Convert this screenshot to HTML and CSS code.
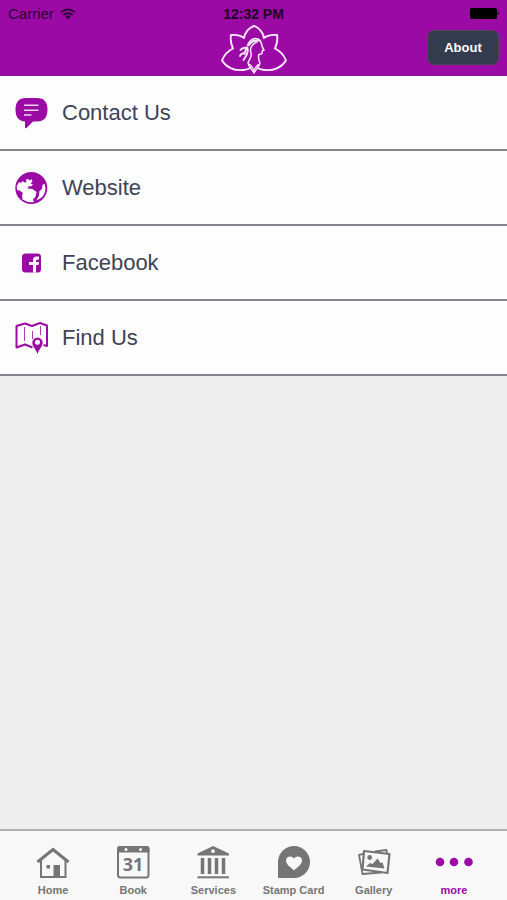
FILE: index.html
```html
<!DOCTYPE html>
<html lang="en">
<head>
<meta charset="utf-8">
<meta name="viewport" content="width=device-width, initial-scale=1">
<title>More</title>
<link rel="stylesheet" href="styles.css">
</head>
<body>
<header class="header">
  <div class="status">
    <div class="carrier">
      <span>Carrier</span>
      <svg class="wifi" viewBox="0 0 16 12" width="16" height="12" aria-hidden="true">
        <path d="M1.200 4.400Q8-1.600 14.800 4.400M3.600 7Q8 3.200 12.400 7" fill="none" stroke="currentColor" stroke-width="1.800"/>
        <path d="M5.400 8.600Q8 6.600 10.600 8.600L8 11.400Z" fill="currentColor"/>
      </svg>
    </div>
    <time class="clock">12:32 PM</time>
    <svg class="battery" viewBox="0 0 29 12" width="29" height="12" aria-hidden="true">
      <rect x="0" y="0" width="27" height="11" rx="1.500"/>
      <path d="M27.500 3.500Q30 5.500 27.500 7.500Z"/>
    </svg>
  </div>
  <div class="navbar">
    <svg class="logo" viewBox="0 0 66 50" width="66" height="50" role="img" aria-label="Lotus logo">
      <g fill="none" stroke="currentColor" stroke-linejoin="round" stroke-linecap="round">
        <path stroke-width="1.900" d="M23 13C24 7 28 3 33 0.800C38 3 42 7 43 13C47 10 51 9.500 56 10C57 15 56 19 54 23.500C59 26 63 30 65 35.500C61 42 53 46 44 45C40 44.500 37.500 44 36.500 42.500M29.500 42.500C28.500 44 26 44.500 22 45C13 46 5 42 1 35.500C3 30 7 26 12 23.500C10 19 9 15 10 10C15 9.500 19 10 23 13"/>
        <path stroke-width="1.500" d="M26.500 20C28 15 33 12.500 37 14C41 16 40.500 20 41.500 22.500L43 25L41.300 25.800C41.500 29 40.500 29.500 38 29.300C37 32 37.500 35 39 38C38.500 42 35 44 33 48C31 44 27.500 42 27 38C28.500 34 31 32 30 28C28.500 24 30.500 19 36 17"/>
        <path stroke-width="2.200" d="M28 20C30 16.500 34 15 38 15.500"/>
        <path stroke-width="1.800" d="M19.500 25C21.500 22.500 24 22.500 26.500 22.500C25 24 24 26 23.500 29M26.500 23C28 28 25 31 22.500 35M19 31C20 28.500 22 28 24 28"/>
        <path stroke-width="1.300" d="M28 39C30 40 32 43 33 46C34 43 36 40 38.500 39"/>
      </g>
    </svg>
    <button class="about" type="button">About</button>
  </div>
</header>

<main class="content">
  <ul class="menu">
    <li><a class="row" href="#contact">
      <svg class="row-icon" viewBox="0 0 34 34" width="34" height="34" aria-hidden="true">
        <path fill="currentColor" d="M12 2H23Q33.500 2 33.500 13.500Q33.500 25.500 23 25.500H19L12.500 32Q11 33 11 31V25.500Q1.500 25 1.500 13.500Q1.500 2 12 2Z"/>
        <path stroke="#f3d5f5" stroke-width="1.500" d="M10 9.300H24.500M10 14.300H24.500M10 19H17.500"/>
      </svg>
      <span>Contact Us</span></a></li>
    <li><a class="row" href="#website">
      <svg class="row-icon" viewBox="0 0 34 34" width="34" height="34" aria-hidden="true">
        <circle cx="17.300" cy="17" r="15" fill="currentColor" stroke="currentColor" stroke-width="2"/>
        <path fill="#fff" d="M2.800 15L5 11L7 12L8.500 10L10.500 11.500L12.500 11L12 8.500L14 8L16 9.500L17.500 8L18.500 10.500L16.500 12.500L19 13.500L17 15.500L15 15L13.500 17.500L18.500 18L22.500 21L21.500 25.500L19 28.500L20 31Q14 32 8.500 28.500L8 24L9 22L5.500 19.500L3 19ZM30.500 12.500L28.500 14L28 18L25.500 20L25 24.500L22.500 29.500Q31.500 26 31.500 17Z"/>
      </svg>
      <span>Website</span></a></li>
    <li><a class="row" href="#facebook">
      <svg class="row-icon" viewBox="0 0 34 34" width="34" height="34" aria-hidden="true">
        <rect x="8" y="7.500" width="19" height="19" rx="3.500" fill="currentColor"/>
        <path fill="#fff" d="M19 26.500V19H15V16H19V14Q19 10.500 22.500 10.500H25V13.500H23.500Q22 13.500 22 15V16H25L24.500 19H22V26.500Z"/>
      </svg>
      <span>Facebook</span></a></li>
    <li><a class="row" href="#find">
      <svg class="row-icon" viewBox="0 0 34 34" width="34" height="34" aria-hidden="true">
        <path fill="none" stroke="currentColor" stroke-width="2" stroke-linejoin="round" d="M18.500 26.500L11 23.500L2.500 26.500V5L11 2.500L18 5L26 2L33 4.500V25L29.500 24"/>
        <path fill="none" stroke="currentColor" stroke-width="1" opacity="0.800" d="M10.500 6V20M18.500 10V18M26.500 5V14"/>
        <path fill="currentColor" fill-rule="evenodd" d="M23.500 33C22 28 18.300 25.500 18.300 21.700A5.200 5.200 0 0 1 28.700 21.700C28.700 25.500 25 28 23.500 33ZM23.500 18.800A2.500 2.500 0 1 0 23.500 23.800A2.500 2.500 0 1 0 23.500 18.800Z"/>
      </svg>
      <span>Find Us</span></a></li>
  </ul>
</main>

<nav class="tabs" aria-label="Main">
  <a class="tab" href="#home">
    <svg viewBox="0 0 34 34" width="34" height="34" aria-hidden="true">
      <path fill="none" stroke="currentColor" stroke-width="3" d="M1.500 17L17 4.500L32.500 17"/>
      <path fill="none" stroke="currentColor" stroke-width="2" d="M5 15V32H29.500V15"/>
      <path fill="currentColor" d="M17.500 20H24V32H17.500ZM10.500 20H14V23.500H10.500Z"/>
    </svg>
    <span>Home</span></a>
  <a class="tab" href="#book">
    <svg viewBox="0 0 34 34" width="34" height="34" aria-hidden="true">
      <rect x="2" y="2" width="30.500" height="30.500" rx="2.500" fill="none" stroke="currentColor" stroke-width="2"/>
      <path fill="currentColor" d="M1 7.500V4Q1 1 4 1H30.500Q33.500 1 33.500 4V7.500Z"/>
      <circle cx="10" cy="4.500" r="1.500" fill="#f8f8f8"/><circle cx="24.500" cy="4.500" r="1.500" fill="#f8f8f8"/>
      <text class="date" x="17" y="26" text-anchor="middle" fill="currentColor">31</text>
    </svg>
    <span>Book</span></a>
  <a class="tab" href="#services">
    <svg viewBox="0 0 34 34" width="34" height="34" aria-hidden="true">
      <path fill="currentColor" fill-rule="evenodd" d="M17 1L33 8.500V10.500H1.500V8.500ZM17 4.300A1.900 1.900 0 1 0 17 8.100A1.900 1.900 0 1 0 17 4.300Z"/>
      <path fill="none" stroke="currentColor" stroke-width="3.500" d="M6.500 13V29M13.500 13V29M20.500 13V29M27.500 13V29"/>
      <path stroke="currentColor" stroke-width="2" d="M1.500 32.300H33"/>
    </svg>
    <span>Services</span></a>
  <a class="tab" href="#stamp">
    <svg viewBox="0 0 34 34" width="34" height="34" aria-hidden="true">
      <path fill="currentColor" d="M17 1A16 16 0 0 1 17 33H2Q1 33 1 32V17A16 16 0 0 1 17 1Z"/>
      <path fill="#f8f8f8" d="M17 25.500C14 22.500 9 19.500 9 15.500C9 11 14.800 10 17 13.500C19.200 10 25 11 25 15.500C25 19.500 20 22.500 17 25.500Z"/>
    </svg>
    <span>Stamp Card</span></a>
  <a class="tab" href="#gallery">
    <svg viewBox="0 0 34 34" width="34" height="34" aria-hidden="true">
      <path fill="none" stroke="currentColor" stroke-width="1.800" stroke-linejoin="round" d="M6 9L2 9.800L5.500 29L24 27.500M18 6.500L29.500 5L30 8"/>
      <path fill="none" stroke="currentColor" stroke-width="2.200" stroke-linejoin="round" d="M7 6L32.500 9L30.500 28L5.500 24.500Z"/>
      <path fill="currentColor" d="M9 21.500L13 18L15.500 19L20.500 13.500L23.500 18L25.500 17.500L27.500 23.500Z"/>
      <circle cx="12.700" cy="12.500" r="2.400" fill="currentColor"/>
    </svg>
    <span>Gallery</span></a>
  <a class="tab active" href="#more" aria-current="page">
    <svg viewBox="0 0 38 34" width="38" height="34" aria-hidden="true">
      <g fill="currentColor"><circle cx="5" cy="17" r="4.300"/><circle cx="19" cy="17" r="4.300"/><circle cx="33.500" cy="17" r="4.300"/></g>
    </svg>
    <span>more</span></a>
</nav>
</body>
</html>
```
FILE: styles.css
```css
* {
  box-sizing: border-box;
}

body {
  margin: 0;
  min-height: 100vh;
  display: flex;
  flex-direction: column;
  background: #eee;
  font-family: "Liberation Sans", Arial, sans-serif;
}

a {
  color: inherit;
  text-decoration: none;
}

.header {
  background: #9c0aa6;
  border-bottom: 1px solid #8a1494;
}

.status,
.navbar {
  display: grid;
  grid-template-columns: 1fr auto 1fr;
}

.status {
  height: 25px;
  padding: 0 8px;
  align-items: center;
  color: #2b0633;
  font-size: 14px;
  line-height: 28px;
}

.carrier {
  display: flex;
  align-items: center;
  gap: 6px;
  font-size: 15px;
}

.clock {
  color: #1d0423;
  font-weight: bold;
}

.battery {
  justify-self: end;
  fill: #000;
}

.navbar {
  height: 50px;
  padding: 0 8px;
}

.logo {
  grid-column: 2;
  color: #fbeafc;
}

.about {
  justify-self: end;
  width: 72px;
  height: 35px;
  margin-top: 5px;
  padding: 0;
  border: 1px solid #4b4a58;
  border-radius: 7px;
  background: #333b4f;
  color: #fff;
  font: bold 13px "Liberation Sans", Arial, sans-serif;
}

.content {
  flex: 1;
}

.menu {
  margin: 0;
  padding: 0;
  list-style: none;
}

.row {
  display: flex;
  align-items: center;
  gap: 14px;
  height: 75px;
  padding: 0 14px;
  border-bottom: 2px solid #85858f;
  background: #fdfdfd;
  color: #3d4456;
  font-size: 22px;
  line-height: 26px;
}

.row-icon {
  color: #9c0aa6;
}

.tabs {
  display: grid;
  grid-template-columns: repeat(6, 1fr);
  padding: 14px 13px 3px;
  border-top: 2px solid #b0b0b0;
  background: #f8f8f8;
}

.tab {
  display: flex;
  flex-direction: column;
  align-items: center;
  gap: 4px;
  color: #757575;
  font-size: 11px;
  font-weight: bold;
  line-height: 14px;
  white-space: nowrap;
}

.tab.active {
  color: #9c0aa6;
}

.date {
  font: bold 18px "Open Sans", sans-serif;
}
```
